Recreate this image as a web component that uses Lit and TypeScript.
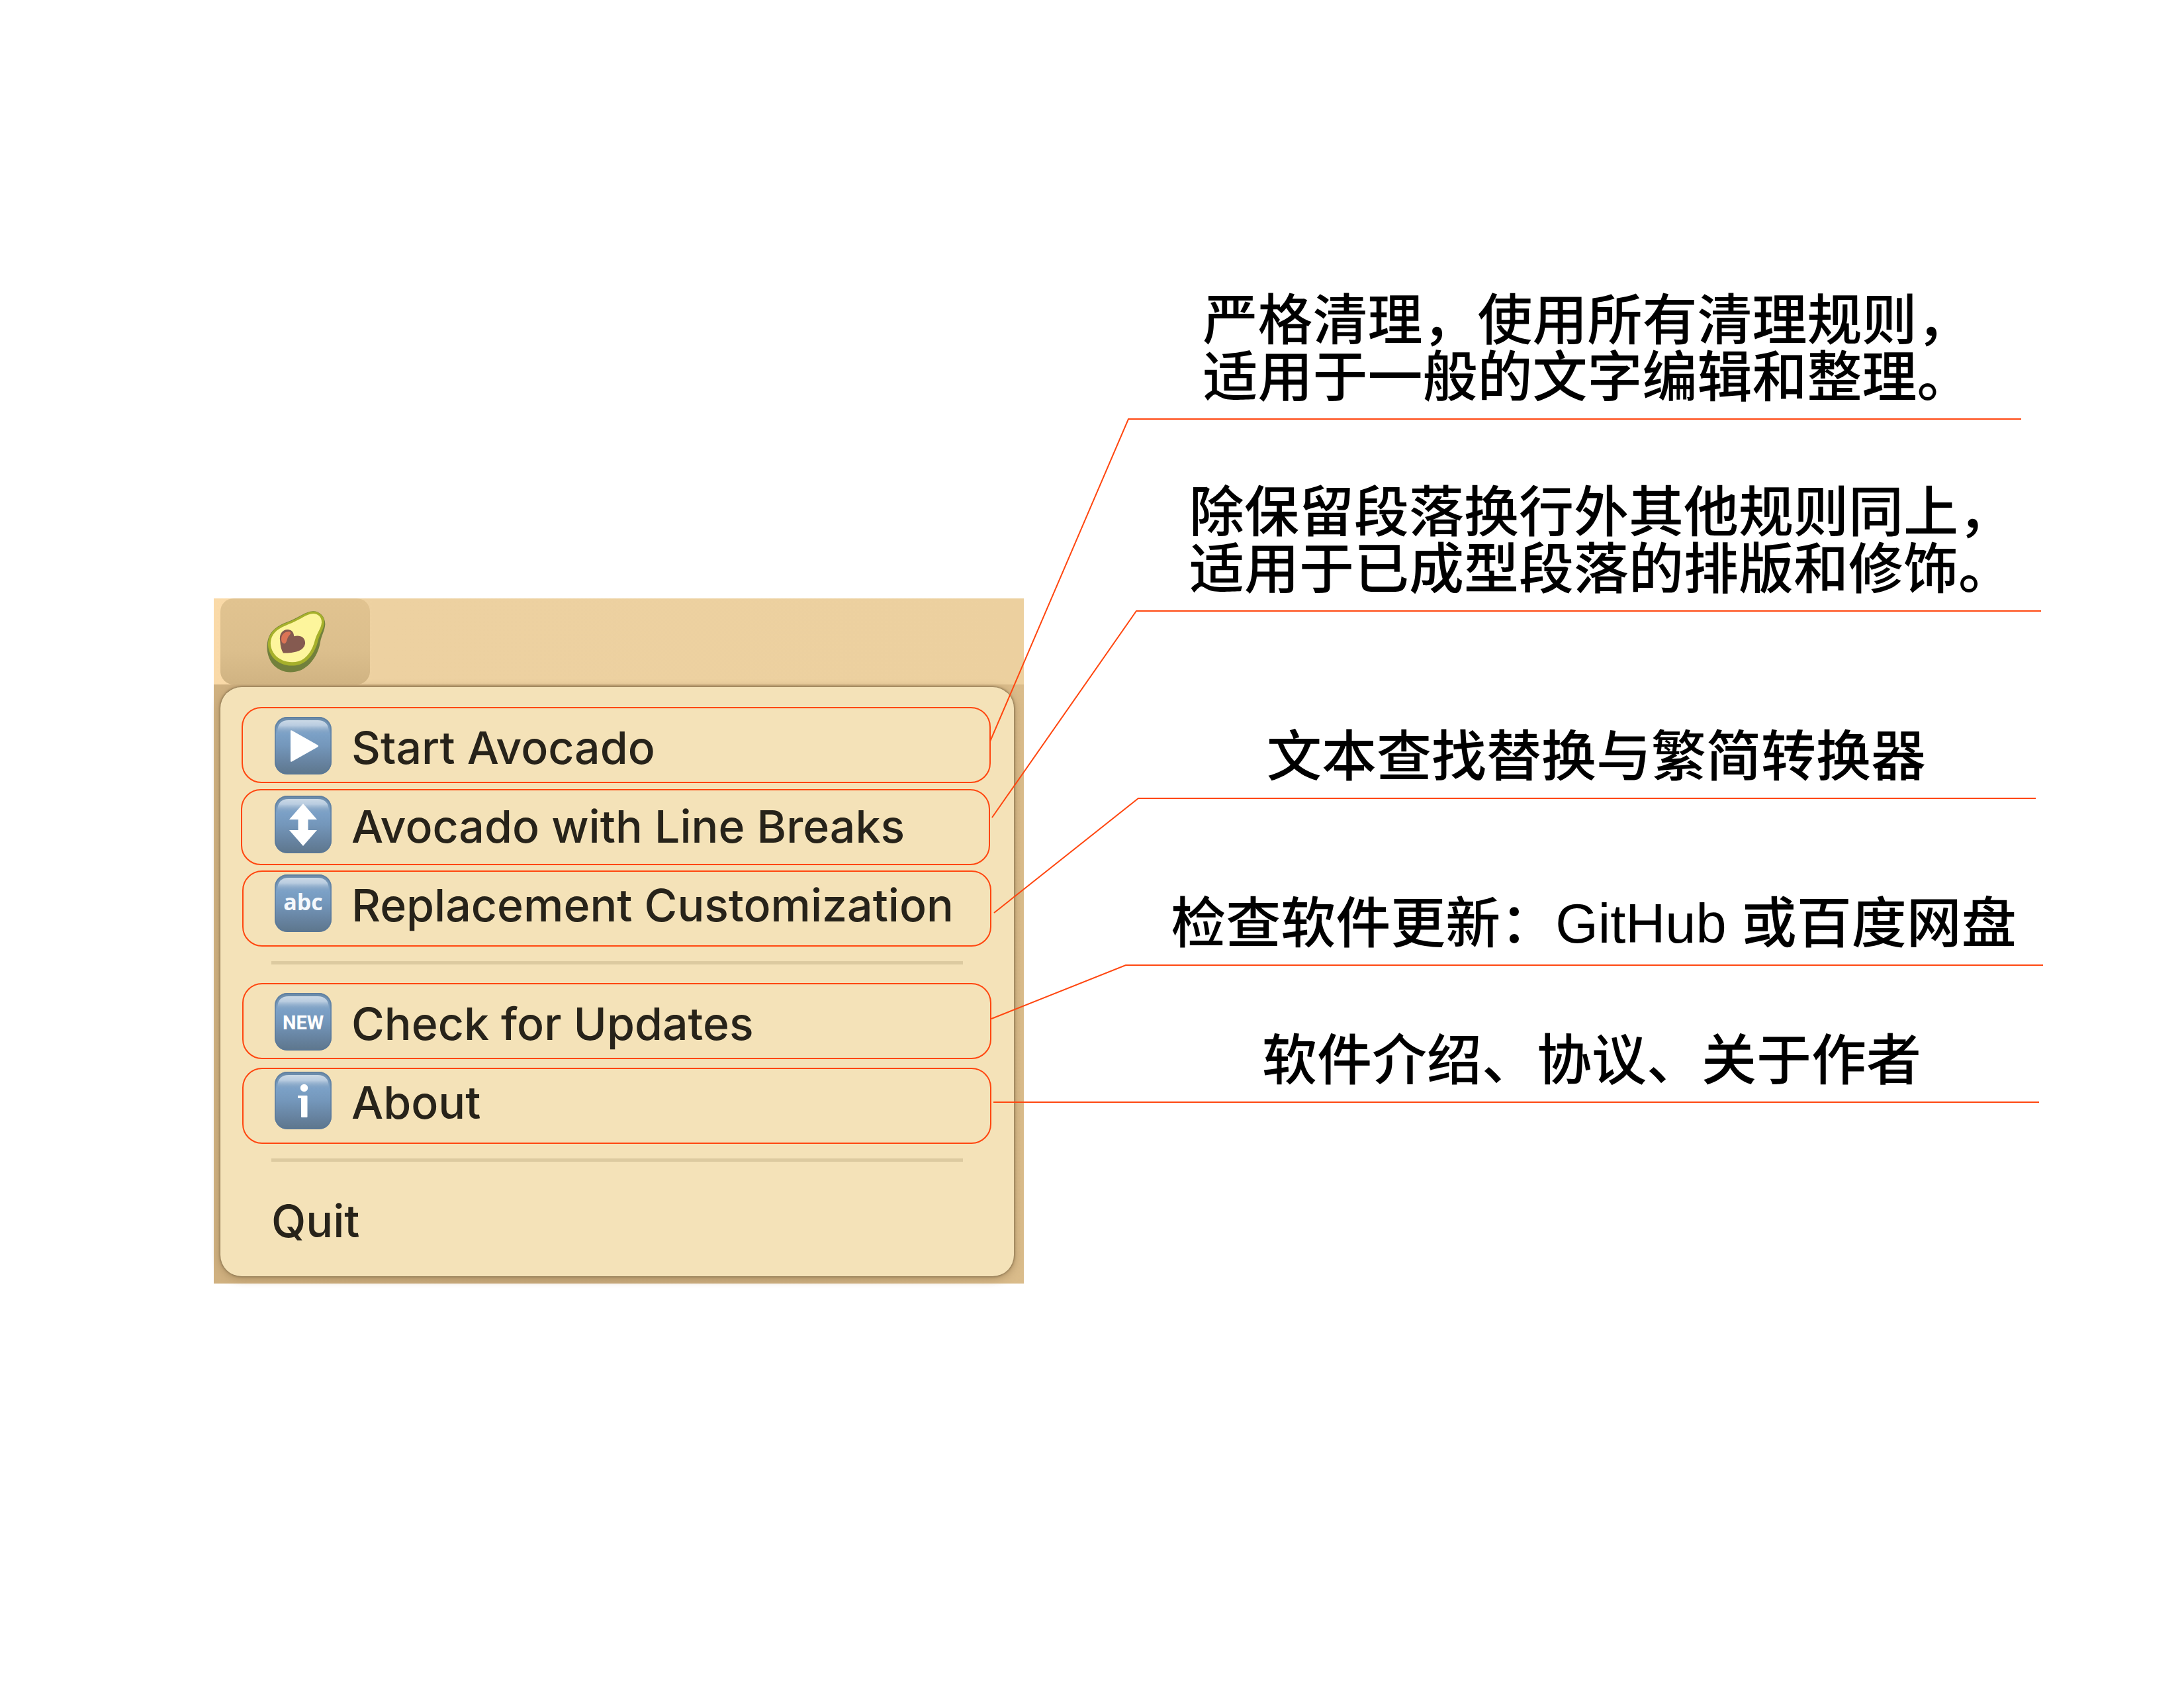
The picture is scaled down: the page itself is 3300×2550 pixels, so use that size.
import { LitElement, html, css, svg, nothing } from "lit";
import { customElement, property } from "lit/decorators.js";

type IconName = "play" | "updown" | "abc" | "new" | "info";

interface Entry {
  label: string;
  icon?: IconName;
}

interface Callout {
  lines: string[];
  /** Frame drawn round the menu entry, in board units. */
  frame: { x: number; y: number };
  /** Leader line from the frame to the note, in board units. */
  leader: Array<[number, number]>;
}

/* The board's coordinate space, shared by frames and leaders. */
const BOARD_W = 2764;
const BOARD_H = 1519;
const NOTES_X = 1224;
const NOTES_W = 1540;
const FRAME_W = 1130;
const FRAME_H = 113;

const GROUPS: Entry[][] = [
  [
    { label: "Start Avocado", icon: "play" },
    { label: "Avocado with Line Breaks", icon: "updown" },
    { label: "Replacement Customization", icon: "abc" },
  ],
  [
    { label: "Check for Updates", icon: "new" },
    { label: "About", icon: "info" },
  ],
  [{ label: "Quit" }],
];

const CALLOUTS: Callout[] = [
  {
    lines: ["严格清理，使用所有清理规则，", "适用于一般的文字编辑和整理。"],
    frame: { x: 43, y: 649 },
    leader: [[1173, 700], [1382, 213], [2731, 213]],
  },
  {
    lines: ["除保留段落换行外其他规则同上，", "适用于已成型段落的排版和修饰。"],
    frame: { x: 42, y: 773 },
    leader: [[1176, 815], [1394, 503], [2761, 503]],
  },
  {
    lines: ["文本查找替换与繁简转换器"],
    frame: { x: 44, y: 896 },
    leader: [[1179, 959], [1397, 786], [2753, 786]],
  },
  {
    lines: ["检查软件更新：GitHub 或百度网盘"],
    frame: { x: 44, y: 1066 },
    leader: [[1175, 1119], [1378, 1038], [2764, 1038]],
  },
  {
    lines: ["软件介绍、协议、关于作者"],
    frame: { x: 44, y: 1194 },
    leader: [[1178, 1245], [1378, 1245], [2758, 1245]],
  },
];

@customElement("key-icon")
class KeyIcon extends LitElement {
  @property() name: IconName = "play";

  static styles = css`
    :host { display: block; flex: none; width: 86px; height: 87px; }
    .key { display: block; width: 100%; height: 100%; }
    .abc { font: 700 34px "Open Sans", "Noto Sans", sans-serif; }
    .new { font: 700 29px "Roboto", sans-serif; }
  `;

  private glyph() {
    switch (this.name) {
      case "play":
        return svg`<path d="M24 21.5Q24 19.500 26 20.500L65 42.500Q67 44 65 45.500L26 67.500Q24 68.500 24 66.500Z" fill="#fff"/>`;
      case "updown":
        return svg`<path d="M43 12L64 36H50.500V52H64L43 76L22 52H35.500V36H22Z" fill="#fff"/>`;
      case "abc":
        return svg`<text class="abc" x="43" y="54" text-anchor="middle" fill="#f4f8fc">abc</text>`;
      case "new":
        return svg`<text class="new" x="43" y="55" text-anchor="middle" fill="#fff">NEW</text>`;
      default:
        return svg`<circle cx="44.500" cy="24.500" r="5.700" fill="#fff"/>
          <path d="M35 38H44.500" fill="none" stroke="#fff" stroke-width="4"/>
          <rect x="40" y="36" width="9.500" height="33" rx="1" fill="#fff"/>`;
    }
  }

  render() {
    return html`<svg class="key" viewBox="0 0 86 87" aria-hidden="true">
      <defs>
        <linearGradient id="face" x1="0" y1="0" x2="0" y2="1">
          <stop offset="0" stop-color="#6a8aa8" />
          <stop offset="0.3" stop-color="#7ba0c6" />
          <stop offset="0.5" stop-color="#7497bb" />
          <stop offset="0.8" stop-color="#66829f" />
          <stop offset="1" stop-color="#5d768c" />
        </linearGradient>
        <linearGradient id="shine" x1="0" y1="0" x2="0" y2="1">
          <stop offset="0" stop-color="#cbd9e6" />
          <stop offset="0.35" stop-color="#b9cce0" />
          <stop offset="1" stop-color="#7ba0c6" stop-opacity="0" />
        </linearGradient>
      </defs>
      <rect width="86" height="87" rx="19" fill="url(#face)" />
      <rect x="1" y="1" width="84" height="85" rx="18" fill="none" stroke="#58789a" stroke-opacity="0.6" stroke-width="2" />
      <path d="M4 28V22Q5 5 21 5H65Q81 5 82 22V28Z" fill="url(#shine)" />
      ${this.glyph()}
    </svg>`;
  }
}

@customElement("avocado-menu")
class AvocadoMenu extends LitElement {
  static styles = css`
    :host {
      display: block;
      font-family: "Inter", "Liberation Sans", sans-serif;
      color: #27231a;
      background: linear-gradient(90deg, #d0b180, #c8aa7c 40%, #cfb182 75%, #dabc8b);
    }
    .bar {
      display: flex;
      height: 130px;
      padding-left: 10px;
      background: linear-gradient(90deg, #fadaa8, #edd1a1 20%, #ecd09f);
    }
    .status {
      display: flex;
      align-items: center;
      justify-content: center;
      width: 226px;
      padding: 0;
      border: 0;
      border-radius: 20px;
      background: linear-gradient(#e1c390, #dcbf8d 60%, #d0b382);
    }
    .avocado { display: block; width: 93px; height: 97px; }
    .panel {
      margin: 4px 15px 11px 10px;
      padding: 29px 77px 27px;
      border-radius: 32px;
      background: #f4e2b8;
      box-shadow: 0 0 3px 1px #8a744f, 0 3px 14px #a88c60;
    }
    .group { margin: 0; padding: 0; list-style: none; }
    .divider { height: 5px; margin: 28px 0 27px; border: 0; background: #dccaa0; }
    .entry {
      display: flex;
      align-items: center;
      gap: 30px;
      width: 100%;
      height: 119px;
      padding: 0;
      border: 0;
      background: none;
      color: inherit;
      font: inherit;
      font-size: 68px;
      font-weight: 450;
      line-height: 84px;
      text-align: left;
      white-space: nowrap;
    }
    .keyed { padding-left: 5px; }
    .label { padding-top: 4px; }
  `;

  render() {
    return html`
      <div class="bar">
        <button class="status" aria-label="Avocado">
          <svg class="avocado" viewBox="270 90 280 290" aria-hidden="true">
            <path d="M490 96C520 96 545 120 545 155C543 185 528 205 522 240C514 290 480 345 430 366C385 382 335 372 305 335C280 302 274 255 288 215C305 172 345 155 390 138C430 122 455 98 490 96Z" fill="#72803c" />
            <path d="M490 97C520 97 543 120 541 148C539 178 520 200 512 232C500 280 470 325 430 338C385 352 335 340 306 305C284 275 280 245 290 215C305 174 345 157 390 140C430 124 455 99 490 97Z" fill="#a6b02b" />
            <path d="M490 107C514 107 530 124 529 147C527 175 508 194 499 226C488 272 462 312 424 324C385 334 342 324 316 294C296 268 292 240 302 215C316 180 352 166 394 149C434 133 458 109 490 107Z" fill="#fdf59c" />
            <path d="M340 232C334 198 352 178 376 179C394 181 403 193 403 210C430 203 455 214 454 242C450 275 410 288 354 286C345 272 341 252 340 232Z" fill="#855a50" />
            <path d="M346 215C350 196 366 187 382 189C392 192 388 200 380 208C370 220 372 236 362 243C350 246 343 232 346 215Z" fill="#dc7455" />
          </svg>
        </button>
      </div>
      <nav class="panel" aria-label="Avocado">
        ${GROUPS.map(
          (group, i) => html`
            ${i > 0 ? html`<hr class="divider" />` : nothing}
            <ul class="group">
              ${group.map(
                (e) => html`<li>
                  <button class="entry ${e.icon ? "keyed" : ""}">
                    ${e.icon ? html`<key-icon .name=${e.icon}></key-icon>` : nothing}
                    <span class="label">${e.label}</span>
                  </button>
                </li>`
              )}
            </ul>
          `
        )}
      </nav>
    `;
  }
}

@customElement("app-root")
class AppRoot extends LitElement {
  static styles = css`
    :host { display: block; background: #fff; }
    .page {
      display: grid;
      box-sizing: border-box;
      min-height: 100vh;
      padding: 420px 0 80px;
      grid-template-columns: 323fr 1224fr 1540fr 213fr;
      grid-template-rows: max-content;
    }
    .menu { grid-area: 1 / 2; align-self: end; }
    .notes {
      grid-area: 1 / 3;
      display: grid;
      grid-template-rows: 214px 290px 283px 252px 207px;
      align-content: start;
      padding-bottom: 273px;
    }
    .note {
      display: grid;
      align-content: end;
      justify-content: center;
      padding-bottom: 20px;
      color: #000;
      font: 500 83px/86px "Liberation Sans", "Noto Sans CJK SC", sans-serif;
      white-space: nowrap;
    }
    .text { margin: 0; padding-left: 28px; }
    .long { padding-left: 38px; }
    .line { display: block; }
    .marks {
      grid-area: 1 / 2 / 2 / 4;
      width: 100%;
      height: 100%;
      overflow: visible;
      pointer-events: none;
    }
    .stroke { fill: none; stroke: #ff460f; stroke-width: 2; vector-effect: non-scaling-stroke; }
  `;

  private note(c: Callout) {
    const start = c.leader[1][0] - NOTES_X;
    const end = c.leader[2][0] - NOTES_X;
    const left = (start / NOTES_W) * 100;
    const right = ((NOTES_W - end) / NOTES_W) * 100;
    return html`<div class="note" style="margin-left:${left}%;margin-right:${right}%">
      <p class="text ${c.lines.length > 1 ? "long" : ""}">
        ${c.lines.map((l) => html`<span class="line">${l}</span>`)}
      </p>
    </div>`;
  }

  render() {
    return html`<main class="page">
      <avocado-menu class="menu"></avocado-menu>
      <section class="notes">${CALLOUTS.map((c) => this.note(c))}</section>
      <svg class="marks" viewBox="0 0 ${BOARD_W} ${BOARD_H}" preserveAspectRatio="none" aria-hidden="true">
        ${CALLOUTS.map(
          (c) => svg`
            <rect class="stroke" x=${c.frame.x} y=${c.frame.y} width=${FRAME_W} height=${FRAME_H} rx="29" />
            <polyline class="stroke" points=${c.leader.map((p) => p.join(",")).join(" ")} />`
        )}
      </svg>
    </main>`;
  }
}
